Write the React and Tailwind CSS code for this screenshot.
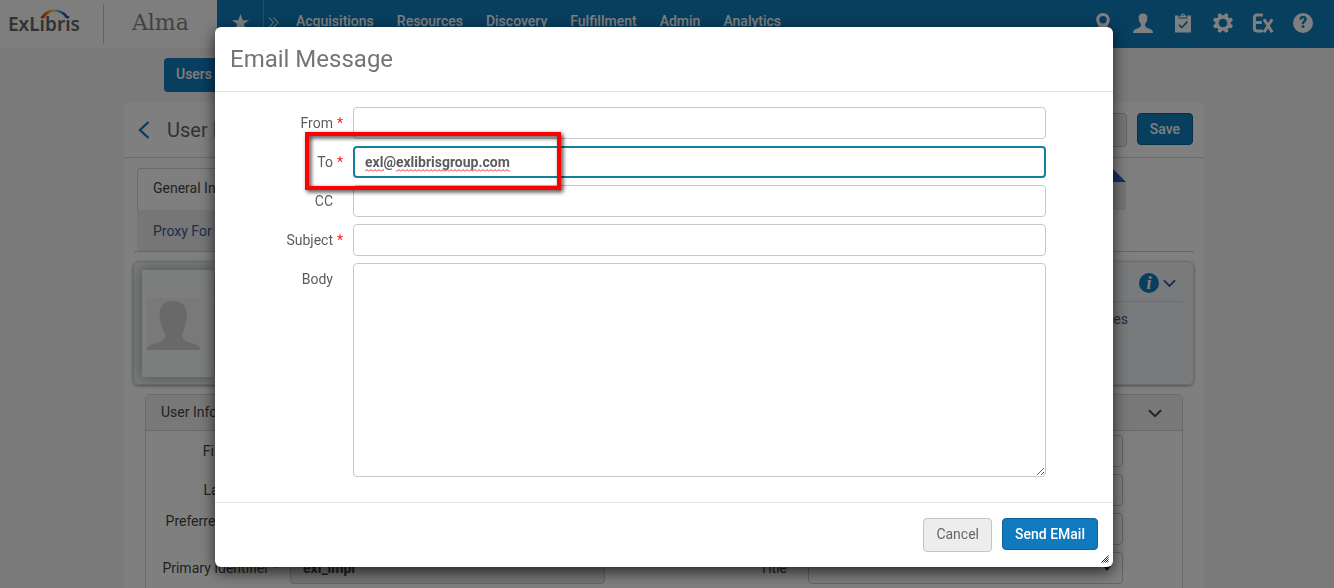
import React, { useState } from "react";

const navItems = ["Acquisitions", "Resources", "Discovery", "Fulfillment", "Admin", "Analytics"];

const tabs = ["General Information", "Contact Information", "Identifiers", "Notes", "Blocks", "Statistics"];

const leftFields = [
  { id: "firstName", label: "First name", required: false, value: "" },
  { id: "lastName", label: "Last name", required: false, value: "" },
  { id: "middleName", label: "Preferred middle name", required: false, value: "" },
  { id: "primaryId", label: "Primary Identifier", required: true, value: "exl_impl" },
];

const rightFields = [
  { id: "middle", label: "Middle name" },
  { id: "preferredFirst", label: "Preferred first" },
  { id: "preferredLast", label: "Preferred last" },
];

const Chevron = ({ className }) => (
  <svg viewBox="0 0 14 9" className={className} fill="none" stroke="currentColor" strokeWidth="2">
    <path d="M1 1.2 L7 7.2 L13 1.2" />
  </svg>
);

const Logo = () => (
  <a href="#" className="relative block font-['Noto_Sans'] text-[19px] leading-6 font-semibold text-[#666]">
    ExLibris
    <svg viewBox="0 0 28 10" className="absolute top-[-3px] left-[33px] h-[10px] w-7" fill="none">
      <defs>
        <linearGradient id="arc" x1="0" x2="1" y1="0" y2="0">
          <stop offset="0" stopColor="#e0301e" />
          <stop offset="0.25" stopColor="#f39200" />
          <stop offset="0.42" stopColor="#e8d44a" />
          <stop offset="0.55" stopColor="#7fd0c0" />
          <stop offset="0.75" stopColor="#1878d0" />
          <stop offset="1" stopColor="#4a2a9a" />
        </linearGradient>
      </defs>
      <path d="M0 9 C4 -2.5 22 -2.5 28 9 L24.6 9 C20 0.8 8 0.4 3.8 9 Z" fill="url(#arc)" />
    </svg>
  </a>
);

// Toolbar icons on the right side of the top bar
const PinIcon = () => (
  <svg viewBox="0 0 20 20" className="size-5" fill="currentColor">
    <path fillRule="evenodd" d="M10 0 C6.2 0 3.2 2.9 3.2 6.6 C3.2 11.4 10 20 10 20 C10 20 16.8 11.4 16.8 6.6 C16.8 2.9 13.8 0 10 0 Z M10 3.1 A3.7 3.7 0 1 1 10 10.5 A3.7 3.7 0 1 1 10 3.1 Z" />
  </svg>
);

const UserIcon = () => (
  <svg viewBox="0 0 20 20" className="size-5" fill="currentColor">
    <path d="M10 0.6 C6.8 0.6 5.5 2.4 5.7 5.4 C5.8 7.8 6.6 9.8 8 11 C8 13 7.6 14 5.4 15 C2.4 16 0 17 0 20 L20 20 C20 17 17.6 16 14.6 15 C12.4 14 12 13 12 11 C13.4 9.8 14.2 7.8 14.3 5.4 C14.5 2.4 13.2 0.6 10 0.6 Z" />
  </svg>
);

const ClipboardIcon = () => (
  <svg viewBox="0 0 20 20" className="size-5" fill="none">
    <path d="M2 2.6 H5.6 V5.4 H14.4 V2.6 H18 V19.6 H2 Z" fill="currentColor" />
    <path d="M6.4 4.5 V2.8 H8 C8 -0.4 12 -0.4 12 2.8 H13.6 V4.5 Z" fill="currentColor" />
    <circle cx="10" cy="2.2" r="0.8" fill="#107cbd" />
    <path d="M6 11.8 L8.8 14.6 L14.4 8.6" stroke="#107cbd" strokeWidth="1.6" />
  </svg>
);

const GearIcon = () => (
  <svg viewBox="0 0 20 20" className="size-5">
    <g fill="currentColor">
      {[22.5, 67.5, 112.5, 157.5, 202.5, 247.5, 292.5, 337.5].map((angle) => (
        <path key={angle} d="M7.6 3.6 L8.4 0 H11.6 L12.4 3.6 Z" transform={`rotate(${angle} 10 10)`} />
      ))}
    </g>
    <circle cx="10" cy="10" r="6" fill="none" stroke="currentColor" strokeWidth="3.4" />
  </svg>
);

const ExIcon = () => (
  <svg viewBox="0 0 22 20" className="h-5 w-[22px] shrink-0" fill="none" stroke="currentColor" strokeWidth="3">
    <path d="M10.8 1.9 H5.2 Q2.4 1.9 2.4 4.8 V15.2 Q2.4 18.1 5.2 18.1 H10.8 M2.4 9.6 H9.8" />
    <path d="M12 6.2 L20.2 19.2 M20.2 6.2 L12 19.2" />
  </svg>
);

const HelpIcon = () => (
  <span className="flex size-5 items-center justify-center rounded-full bg-white text-base leading-5 font-black text-[#107cbd]">
    ?
  </span>
);

const toolIcons = [
  { name: "Location", Icon: PinIcon },
  { name: "User menu", Icon: UserIcon },
  { name: "Tasks", Icon: ClipboardIcon },
  { name: "Settings", Icon: GearIcon },
  { name: "Ex Libris", Icon: ExIcon },
  { name: "Help", Icon: HelpIcon },
];

const TopBar = () => (
  <header className="flex h-12 bg-[#107cbd] text-white">
    <div className="flex w-[217px] shrink-0 items-center bg-[#fdfdfd] pl-2">
      <Logo />
      <div className="ml-[23px] h-10 w-px bg-[#c4c4c4]" />
      <span className="ml-7 pb-[2px] font-['DejaVu_Serif'] text-[22px] leading-7 text-[#858585]">Alma</span>
    </div>
    <button aria-label="Favorites" className="flex w-[47px] items-center justify-center border-r border-[#4a9bcb] pb-1">
      <svg viewBox="0 0 20 20" className="size-[17px]" fill="currentColor">
        <path d="M10 0 L12.5 7.3 L20 7.3 L14 11.9 L16.3 19.4 L10 14.9 L3.7 19.4 L6 11.9 L0 7.3 L7.5 7.3 Z" />
      </svg>
    </button>
    <svg viewBox="0 0 11 11" className="mt-[17px] ml-1 size-[11px]" fill="none" stroke="currentColor" strokeWidth="1.2" opacity="0.7">
      <path d="M1 0.5 L5.5 5.5 L1 10.5 M5.5 0.5 L10 5.5 L5.5 10.5" />
    </svg>
    <nav className="ml-[17px] flex grow items-center gap-[23px] pb-[6px]">
      {navItems.map((item) => (
        <a key={item} href="#" className="text-sm font-medium">
          {item}
        </a>
      ))}
    </nav>
    <div className="flex items-center gap-5 pr-[21px] pb-[3px]">
      {toolIcons.map(({ name, Icon }) => (
        <button key={name} aria-label={name} className="flex w-5 justify-center">
          <Icon />
        </button>
      ))}
    </div>
  </header>
);

const TabArea = () => (
  <div className="mx-[10px] border-b border-[#cfcfcf] pt-[10px] pl-[3px]">
    <div className="flex h-[42px] pr-[68px]">
      {tabs.map((tab, i) =>
        i === 0 ? (
          <button key={tab} className="grow rounded-tl border-t border-l border-[#d4d4d4] px-[15px] pb-[3px] text-left whitespace-nowrap">
            {tab}
          </button>
        ) : (
          <button key={tab} className="relative grow bg-[#e9e9e9] px-[15px] text-left whitespace-nowrap text-[#3c5a94]">
            {tab}
            {i === tabs.length - 1 && (
              <svg viewBox="0 0 14 14" className="absolute top-0 right-0 size-[14px] bg-white">
                <path d="M0 0 L14 14 H0 Z" fill="#2f62b5" />
              </svg>
            )}
          </button>
        )
      )}
    </div>
    <button className="block h-[41px] w-28 bg-[#ececec] px-4 text-left whitespace-nowrap text-[#3c5a94]">Proxy For</button>
  </div>
);

const SummaryCard = () => (
  <div className="mt-[9px] mr-[10px] ml-[9px] flex h-[124px] rounded-md border border-[#d5dadd] bg-gradient-to-r from-[#eff2f2] to-[#f2f5f9] p-2 shadow-[0_1px_3px_rgba(0,0,0,0.4)]">
    <div className="flex h-[107px] w-[72px] items-center bg-[#f8fbfa] pl-[5px] shadow-[0_0_12px_rgba(90,110,115,0.6)]">
      <svg viewBox="0 0 53 52" className="h-[52px] w-[53px] bg-[#f0f2f1]">
        <path
          d="M26 3 C17 3 12 9 12.8 16 C12.2 19 13.2 24 14.8 27 C15.5 31 17 34 18.5 36 C19.5 42 13 44 8 45.5 C3 47 0 48 0 52 H53 C53 48 50 47 45 45.5 C40 44 34 42 35 36 C37 33 38 29 38.3 26 C39.8 23 40 19 39.6 15 C40 8 35 3 26 3 Z"
          fill="#d0d2d1"
        />
      </svg>
    </div>
    <div className="grow pr-[2px] text-[#3c5a94]">
      <div className="flex h-8 items-center justify-end gap-1 border-b border-[#d8dce0] pr-[7px] pb-[6px] pl-3">
        <span className="flex size-5 items-center justify-center rounded-full bg-[#107cbd] font-['Liberation_Serif'] text-lg leading-5 font-bold text-white italic">
          i
        </span>
        <Chevron className="mt-[2px] h-[9px] w-[13px] text-[#2d5aa0]" />
      </div>
      <a href="#" className="mr-[55px] block pt-[7px] text-right">
        Notes
      </a>
    </div>
  </div>
);

const fieldStyle = "h-8 min-w-0 grow rounded border border-[#c8c8c8] px-3 font-bold";

const UserSection = () => (
  <section className="mx-[21px] mt-[9px] h-80 rounded-t border border-[#d4d4d4]">
    <div className="flex h-9 items-center justify-between border-b border-[#d4d4d4] bg-[#f1f1f1] pr-5 pb-[2px] pl-[15px]">
      <h3>User Information</h3>
      <Chevron className="mt-1 h-[9px] w-[14px]" />
    </div>
    <div className="grid grid-cols-2 pt-1">
      <div className="flex flex-col gap-[7px] pr-[59px]">
        {leftFields.map((field) => (
          <div key={field.id} className="flex h-8 items-center">
            <label htmlFor={field.id} className="w-[123px] shrink-0 text-right leading-4">
              {field.label}
            </label>
            <span className="w-[21px] shrink-0 pl-1 text-red-600">{field.required ? "*" : ""}</span>
            <input
              id={field.id}
              defaultValue={field.value}
              className={`${fieldStyle} ${field.required ? "bg-[#ededed]" : "bg-white"}`}
            />
          </div>
        ))}
      </div>
      <div className="flex flex-col gap-[7px] pr-[59px]">
        {rightFields.map((field) => (
          <div key={field.id} className="flex h-8 items-center">
            <label htmlFor={field.id} className="mr-[21px] w-[123px] shrink-0 text-right">
              {field.label}
            </label>
            <input id={field.id} className={fieldStyle} />
          </div>
        ))}
        <div className="relative flex h-8 items-center">
          <label htmlFor="title" className="mr-[21px] w-[123px] shrink-0 text-right">
            Title
          </label>
          <select id="title" className={`${fieldStyle} appearance-none`} />
          <svg viewBox="0 0 8 5" className="pointer-events-none absolute right-3 h-[5px] w-2">
            <path d="M0 0 H8 L4 5 Z" fill="#222" />
          </svg>
        </div>
      </div>
    </div>
  </section>
);

const UserPage = () => (
  <main className="mx-auto w-full max-w-[1080px] pt-[10px] text-sm text-[#444]">
    <button className="ml-10 block h-[34px] rounded bg-[#107cbd] px-3 pb-[2px] font-medium text-white">Users</button>
    <div className="mt-[11px] bg-white">
      <div className="flex h-[55px] items-center border-b border-[#d4d4d4] pr-[11px] pl-[14px]">
        <button aria-label="Back">
          <svg viewBox="0 0 12 18" className="h-[18px] w-3" fill="none" stroke="#107cbd" strokeWidth="2.4">
            <path d="M10.5 1 L2 9 L10.5 17" />
          </svg>
        </button>
        <h1 className="ml-[17px] grow text-xl text-[#666]">User Details</h1>
        <button className="h-[34px] rounded border border-[#c4c4c4] bg-[#ededed] px-3">Cancel</button>
        <button className="mb-[2px] ml-[10px] h-8 rounded border border-[#0d5f92] bg-[#107cbd] px-3 font-medium text-white">Save</button>
      </div>
      <TabArea />
      <SummaryCard />
      <UserSection />
    </div>
  </main>
);

// Wavy marks that the spell checker leaves under the address
const SpellMarks = () => (
  <svg viewBox="0 0 146 3" className="pointer-events-none absolute top-[23px] left-[150px] h-[3px] w-[146px]">
    <defs>
      <pattern id="wave" width="4" height="3" patternUnits="userSpaceOnUse">
        <path d="M0 2.5 L2 0.5 L4 2.5" fill="none" stroke="#e8262c" strokeWidth="1" />
      </pattern>
    </defs>
    <rect width="19" height="3" fill="url(#wave)" />
    <rect x="31" width="114" height="3" fill="url(#wave)" />
  </svg>
);

const FormRow = ({ id, label, required, children }) => (
  <div className="relative flex">
    <label htmlFor={id} className="w-[118px] shrink-0 text-right leading-8">
      {label}
    </label>
    <span className="w-5 shrink-0 pl-1 leading-8 text-[#ff1a1a]">{required ? "*" : ""}</span>
    {children}
  </div>
);

const inputStyle = "h-8 min-w-0 grow rounded border border-[#c8c8c8] px-3 outline-none";

const EmailModal = () => {
  const [to, setTo] = useState("exl@exlibrisgroup.com");

  return (
    <div className="fixed inset-0 flex items-start justify-center bg-black/50 pt-[27px] pr-[6px]">
      <form
        role="dialog"
        aria-labelledby="modalTitle"
        onSubmit={(e) => e.preventDefault()}
        className="relative w-full max-w-[898px] rounded-md bg-white text-sm text-[#5c5c5c] shadow-[0_5px_15px_rgba(0,0,0,0.7)]"
      >
        <h2 id="modalTitle" className="border-b border-[#e2e2e2] px-[15px] py-4 text-2xl text-[#757575]">
          Email Message
        </h2>

        <div className="flex flex-col gap-[7px] pt-[15px] pr-[67px] pb-[25px]">
          <FormRow id="from" label="From" required>
            <input id="from" className={inputStyle} />
          </FormRow>
          <FormRow id="to" label="To" required>
            <input
              id="to"
              spellCheck={false}
              value={to}
              onChange={(e) => setTo(e.target.value)}
              className="h-8 min-w-0 grow rounded border-2 border-[#12809f] px-[10px] font-bold outline-none"
            />
            <SpellMarks />
            <div className="pointer-events-none absolute top-[-14px] left-[90px] z-10 h-[58px] w-64 border-4 border-[#fe0000] drop-shadow-[2px_2px_2px_rgba(0,0,0,0.8)]" />
          </FormRow>
          <FormRow id="cc" label="CC">
            <input id="cc" className={inputStyle} />
          </FormRow>
          <FormRow id="subject" label="Subject" required>
            <input id="subject" className={inputStyle} />
          </FormRow>
          <FormRow id="body" label="Body">
            <textarea id="body" className="h-[214px] min-w-0 grow resize rounded border border-[#c8c8c8] p-3 outline-none" />
          </FormRow>
        </div>

        <div className="flex items-start justify-end gap-[10px] border-t border-[#e2e2e2] px-[15px] pt-[15px] pb-[15px]">
          <button type="button" className="h-[34px] rounded border border-[#c4c4c4] bg-[#ededed] px-3 pb-[2px] text-[#666]">
            Cancel
          </button>
          <button type="submit" className="h-8 rounded border border-[#0d6299] bg-[#1179bd] px-3 font-medium text-white">
            Send EMail
          </button>
        </div>

        <svg viewBox="0 0 8 8" className="absolute right-1 bottom-1 size-2" stroke="#222" strokeWidth="1">
          <path d="M0.5 7.5 L7.5 0.5 M2.5 7.5 L7.5 2.5 M4.5 7.5 L7.5 4.5 M6.5 7.5 L7.5 6.5" />
        </svg>
      </form>
    </div>
  );
};

const App = () => {
  return (
    <div className="h-screen overflow-hidden bg-[#f4f4f4] font-['Roboto',sans-serif]">
      <TopBar />
      <div className="pr-[6px]">
        <UserPage />
      </div>
      <EmailModal />
    </div>
  );
};

export default App;
